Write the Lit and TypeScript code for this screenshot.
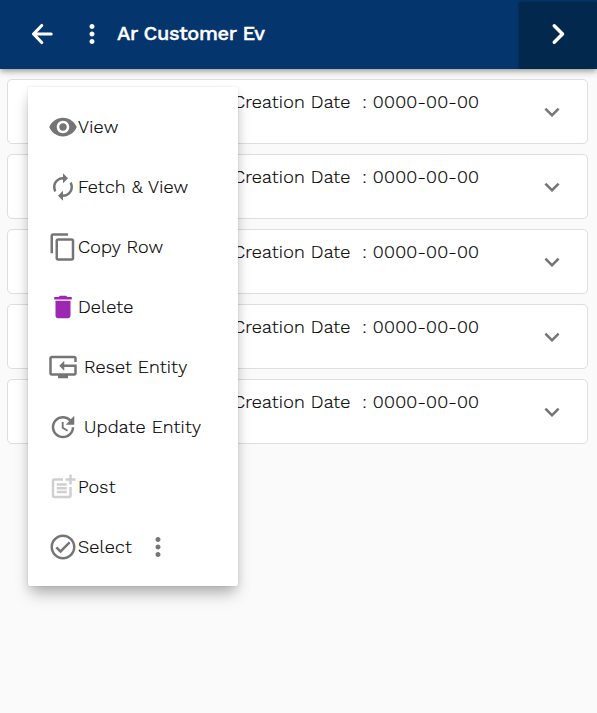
import { LitElement, html, svg, css, nothing } from "lit";
import { customElement } from "lit/decorators.js";

const ICONS: Record<string, string> = {
  more: "M12 8c1.1 0 2-.9 2-2s-.9-2-2-2-2 .9-2 2 .9 2 2 2zm0 2c-1.1 0-2 .9-2 2s.9 2 2 2 2-.9 2-2-.9-2-2-2zm0 6c-1.1 0-2 .9-2 2s.9 2 2 2 2-.9 2-2-.9-2-2-2z",
  expand: "M16.59 8.59 12 13.17 7.41 8.59 6 10l6 6 6-6z",
  view: "M12 4.5C7 4.5 2.73 7.61 1 12c1.73 4.39 6 7.5 11 7.5s9.27-3.11 11-7.5c-1.73-4.39-6-7.5-11-7.5zM12 17c-2.76 0-5-2.24-5-5s2.24-5 5-5 5 2.24 5 5-2.24 5-5 5zm0-8c-1.66 0-3 1.34-3 3s1.34 3 3 3 3-1.34 3-3-1.34-3-3-3z",
  fetch: "M12 6v3l4-4-4-4v3c-4.42 0-8 3.58-8 8 0 1.57.46 3.03 1.24 4.26L6.7 14.8c-.45-.83-.7-1.79-.7-2.8 0-3.31 2.69-6 6-6zm6.76 1.74L17.3 9.2c.44.84.7 1.79.7 2.8 0 3.31-2.69 6-6 6v-3l-4 4 4 4v-3c4.42 0 8-3.58 8-8 0-1.57-.46-3.03-1.24-4.26z",
  copy: "M16 1H4c-1.1 0-2 .9-2 2v14h2V3h12V1zm3 4H8c-1.1 0-2 .9-2 2v14c0 1.1.9 2 2 2h11c1.1 0 2-.9 2-2V7c0-1.1-.9-2-2-2zm0 16H8V7h11v14z",
  delete: "M6 19c0 1.1.9 2 2 2h8c1.1 0 2-.9 2-2V7H6v12zM19 4h-3.500l-1-1h-5l-1 1H5v2h14V4z",
  reset: "M23 8V5c0-1.1-.9-2-2-2H3c-1.1 0-2 .9-2 2v12c0 1.1.9 2 2 2h5v2h8v-2h5c1.1 0 2-.9 2-2v-7H13V7l-4 4 4 4v-3h8v5H3V5h18v3z",
  update: "M21 10.120h-6.780l2.740-2.820c-2.730-2.700-7.150-2.800-9.880-.1-2.730 2.710-2.730 7.080 0 9.790s7.150 2.710 9.880 0C18.320 15.650 19 14.080 19 12.100h2c0 1.980-.88 4.550-2.640 6.290-3.510 3.480-9.210 3.480-12.720 0-3.500-3.470-3.530-9.110-.02-12.580s9.140-3.470 12.650 0L21 3v7.120zM12.500 8v4.250l3.500 2.080-.72 1.210L11 13V8h1.500z",
  post: "M17 19H5V7h7V5H5c-1.1 0-2 .9-2 2v12c0 1.1.9 2 2 2h12c1.1 0 2-.9 2-2v-7h-2zM19 2h-2v3h-3v2h3v3h2V7h3V5h-3zM7 9h8v2H7zM7 12h8v2H7zM7 15h8v2H7z",
  select: "M16.590 7.580 10 14.170l-2.590-2.580L6 13l4 4 8-8zM12 2C6.480 2 2 6.480 2 12s4.480 10 10 10 10-4.480 10-10S17.520 2 12 2zm0 18c-4.420 0-8-3.580-8-8s3.580-8 8-8 8 3.580 8 8-3.580 8-8 8z",
};

const icon = (name: string, cls = "") =>
  html`<svg class="icon ${cls}" viewBox="0 0 24 24">${svg`<path fill-rule="evenodd" d=${ICONS[name]}></path>`}</svg>`;

interface MenuEntry {
  icon: string;
  label: string;
  cls?: string;
  indent?: boolean;
  more?: boolean;
}

const MENU: MenuEntry[] = [
  { icon: "view", label: "View" },
  { icon: "fetch", label: "Fetch & View" },
  { icon: "copy", label: "Copy Row" },
  { icon: "delete", label: "Delete", cls: "accent" },
  { icon: "reset", label: "Reset Entity", indent: true },
  { icon: "update", label: "Update Entity", indent: true },
  { icon: "post", label: "Post", cls: "disabled" },
  { icon: "select", label: "Select", more: true },
];

@customElement("app-root")
export class AppRoot extends LitElement {
  static styles = css`
    :host {
      display: block;
      position: relative;
      height: 713px;
      overflow: hidden;
      background: #fafafa;
      color: #000;
      font: 300 18px/24px "Work Sans", Inter, "Liberation Sans", sans-serif;
      letter-spacing: 0.22px;
      -webkit-text-stroke: 0.2px currentColor;
    }
    .bar {
      position: relative;
      display: flex;
      align-items: center;
      height: 69px;
      padding: 0 0 1px 27px;
      box-sizing: border-box;
      background: #04356c;
      color: #fff;
      box-shadow: 0 2px 4px -1px rgba(0, 0, 0, 0.2), 0 4px 5px rgba(0, 0, 0, 0.14), 0 1px 10px rgba(0, 0, 0, 0.12);
    }
    .icon { width: 30px; height: 30px; flex: none; fill: currentColor; display: block; }
    .line { fill: none; stroke: currentColor; stroke-width: 2.5; stroke-linecap: round; stroke-linejoin: round; }
    .bar .more { margin-left: 20px; }
    .title { margin-left: 10px; padding-bottom: 2px; font-size: 20px; font-weight: 500; letter-spacing: -0.35px; -webkit-text-stroke-width: 0.4px; white-space: nowrap; }
    .next {
      display: flex;
      align-items: center;
      justify-content: center;
      width: 78px;
      height: 67px;
      box-sizing: border-box;
      padding-bottom: 3px;
      margin: 3px 0 0 auto;
      background: #02284e;
      box-shadow: 0 0 3px #02284e;
      clip-path: inset(-3px 0 0 -3px);
    }
    .next .line { stroke-width: 2.8; }
    .list { display: flex; flex-direction: column; gap: 10px; padding: 10px 9px 0 7px; }
    .card {
      display: flex;
      height: 65px;
      box-sizing: border-box;
      border: 1px solid #dedede;
      border-radius: 5px;
      background: #fff;
      padding: 10px 20px 0 225px;
    }
    .field { white-space: pre; }
    .expand { margin: 7px 0 0 auto; color: #757575; }
    .menu {
      position: absolute;
      left: 28px;
      top: 87px;
      width: 210px;
      height: 499px;
      box-sizing: border-box;
      padding: 10px 20px;
      border-radius: 2px;
      background: #fff;
      box-shadow: 0 0 0 1px rgba(0, 0, 0, 0.03), 0 10px 15px -3px rgba(0, 0, 0, 0.28), 0 4px 10px rgba(0, 0, 0, 0.07);
    }
    .item { display: flex; align-items: center; height: 60px; white-space: nowrap; }
    .item .icon { color: #757575; }
    .item .accent { color: #9c27b0; }
    .item .disabled { color: #cfcfcf; }
    .indent { margin-left: 6px; }
    .item .more { margin-left: 11px; }
  `;

  render() {
    return html`
      <header class="bar">
        <svg class="icon line" viewBox="0 0 24 24"><path d="M19.300 12H5.300M11.800 5.200L5.200 12l6.600 6.800"></path></svg>
        ${icon("more", "more")}
        <div class="title">Ar Customer Ev</div>
        <div class="next">
          <svg class="icon line" viewBox="0 0 24 24"><path d="M9 5.400l6.600 6.600L9 18.600"></path></svg>
        </div>
      </header>
      <main class="list">
        ${Array.from({ length: 5 }, () => html`
          <section class="card">
            <div class="field">Creation Date  : 0000-00-00</div>
            ${icon("expand", "expand")}
          </section>`)}
      </main>
      <nav class="menu">
        ${MENU.map((m) => html`
          <div class="item">
            ${icon(m.icon, m.cls ?? "")}
            <span class="label ${m.indent ? "indent" : ""}">${m.label}</span>
            ${m.more ? icon("more", "more") : nothing}
          </div>`)}
      </nav>
    `;
  }
}
